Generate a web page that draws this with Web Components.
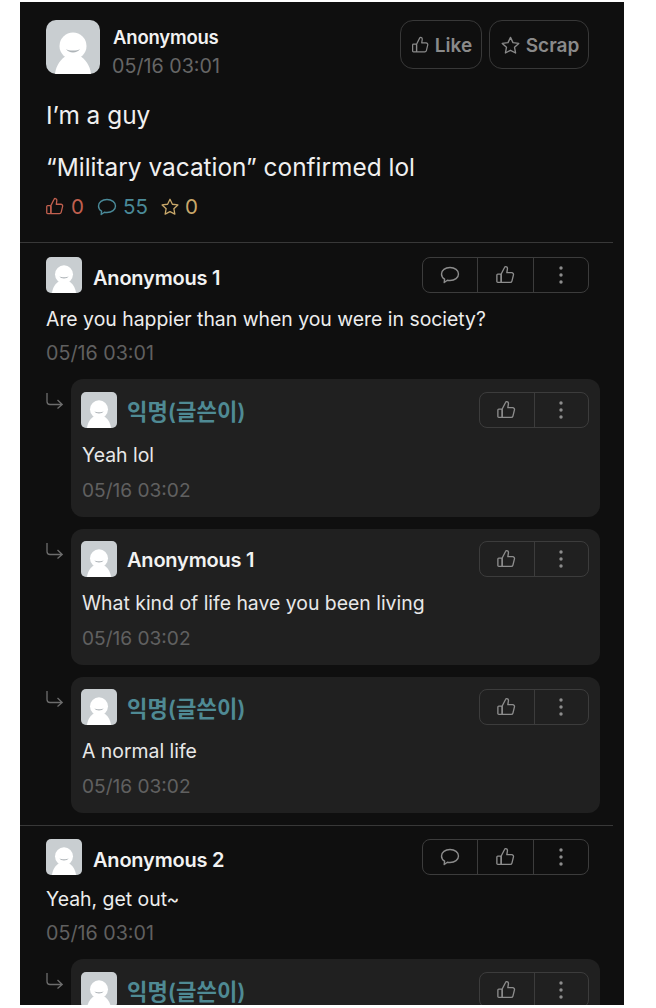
<!DOCTYPE html>
<html>
<head>
<meta charset="utf-8">
<style>
    html, body { margin: 0; padding: 0; background: #fff; }
    body { font-family: Inter, "Noto Sans CJK KR", sans-serif; height: 1008px; overflow: hidden; }
</style>
</head>
<body>
<app-panel>
    <main-post name="Anonymous" date="05/16 03:01" likes="0" comments="55" scraps="0">
        <p>I’m a guy</p>
        <p>“Military vacation” confirmed lol</p>
    </main-post>
    <post-comment name="Anonymous 1" date="05/16 03:01" text="Are you happier than when you were in society?">
        <post-reply author name="익명(글쓴이)" date="05/16 03:02" text="Yeah lol"></post-reply>
        <post-reply name="Anonymous 1" date="05/16 03:02" text="What kind of life have you been living"></post-reply>
        <post-reply author name="익명(글쓴이)" date="05/16 03:02" text="A normal life"></post-reply>
    </post-comment>
    <post-comment name="Anonymous 2" date="05/16 03:01" text="Yeah, get out~">
        <post-reply author name="익명(글쓴이)"></post-reply>
    </post-comment>
</app-panel>

<script>
const ICONS = {
    thumb: `<path d="M7.5 10.5 11 3.6c.3-.7 1-1 1.6-.8 1 .3 1.6 1.2 1.4 2.3L13.4 9h5c1.3 0 2.2 1.2 1.9 2.4l-1.6 6.4c-.2.8-1 1.4-1.8 1.4H7.5z"/><rect x="3" y="10.5" width="4.5" height="8.7" rx="1"/>`,
    bubble: `<path d="M12 4.5c4.8 0 8.5 2.8 8.5 6.5s-3.7 6.5-8.5 6.5c-.9 0-1.8-.1-2.6-.3L6.2 19.5l.4-3.3C4.6 15 3.5 13.1 3.5 11c0-3.7 3.7-6.5 8.5-6.5z"/>`,
    star: `<path d="m12 3.5 2.6 5.5 6 .8-4.4 4.1 1.1 5.9L12 17l-5.3 2.8 1.1-5.9-4.4-4.1 6-.8z"/>`
};

class UiIcon extends HTMLElement {
    connectedCallback() {
        const size = this.getAttribute("size") || 20;
        this.attachShadow({mode: "open"}).innerHTML = `
            <style>
                :host { display: inline-flex; color: inherit; }
                svg { fill: none; stroke: currentColor; stroke-width: 1.4; stroke-linejoin: round; stroke-linecap: round; }
            </style>
            <svg width="${size}" height="${size}" viewBox="0 0 24 24">${ICONS[this.getAttribute("name")]}</svg>
        `;
    }
}

class UserAvatar extends HTMLElement {
    connectedCallback() {
        const size = this.getAttribute("size") || 36;
        const radius = size > 40 ? 10 : 5;
        this.attachShadow({mode: "open"}).innerHTML = `
            <style>
                :host { display: block; flex: none; width: ${size}px; height: ${size}px; border-radius: ${radius}px; overflow: hidden; background: #c9ced1; }
                svg { display: block; width: 100%; height: 100%; }
            </style>
            <svg viewBox="0 0 54 54">
                <path d="M9 54c1-9 6-15 11-18h14c5 3 10 9 11 18z" fill="#fff"/>
                <circle cx="27" cy="26" r="13.5" fill="#fff"/>
                <path d="M20 29c2.5 4.5 11.5 4.5 14 0-2.5 2-11.5 2-14 0z" fill="#aeb4b8"/>
            </svg>
        `;
    }
}

class BtnGroup extends HTMLElement {
    connectedCallback() {
        const withReply = this.hasAttribute("reply");
        const dots = `<svg width="4" height="18" viewBox="0 0 4 18"><circle cx="2" cy="2" r="1.7"/><circle cx="2" cy="9" r="1.7"/><circle cx="2" cy="16" r="1.7"/></svg>`;
        this.attachShadow({mode: "open"}).innerHTML = `
            <style>
                :host { display: flex; flex: none; width: ${withReply ? 167 : 110}px; height: 36px; box-sizing: border-box; border: 1px solid #3c3c3c; border-radius: 8px; color: #8d8d8d; }
                div { flex: 1; display: flex; align-items: center; justify-content: center; }
                div + div { border-left: 1px solid #3c3c3c; }
                svg { fill: #8d8d8d; }
            </style>
            ${withReply ? `<div><ui-icon name="bubble" size="24"></ui-icon></div>` : ""}
            <div><ui-icon name="thumb" size="23"></ui-icon></div>
            <div>${dots}</div>
        `;
    }
}

class MainPost extends HTMLElement {
    connectedCallback() {
        const a = n => this.getAttribute(n);
        this.attachShadow({mode: "open"}).innerHTML = `
            <style>
                :host { display: block; padding: 18px 35px 22px 26px; }
                .head { display: flex; align-items: flex-start; }
                .who { flex: 1; margin-left: 13px; }
                .name { font-size: 18.5px; font-weight: 600; color: #f2f2f2; line-height: 24px; margin-top: 5px; letter-spacing: -0.2px; }
                .date { font-size: 19.7px; color: #666; line-height: 24px; margin: 5px 0 0 -1px; }
                .btns { display: flex; gap: 7px; }
                .btn { display: flex; align-items: center; justify-content: center; gap: 4px; height: 49px; box-sizing: border-box; padding-top: 2px; border: 1px solid #383838; border-radius: 13px; color: #8a8a8a; font-size: 19px; font-weight: 600; }
                .body { margin-top: 20px; font-size: 24.4px; line-height: 34px; color: #f0f0f0; }
                ::slotted(p) { margin: 0 0 18px; }
                .stats { display: flex; align-items: center; margin-top: -8px; font-size: 20.5px; line-height: 26px; }
                .stat { display: flex; align-items: center; gap: 4px; margin-right: 11px; }
                .stat:first-child { margin-left: -2px; gap: 5px; }
            </style>
            <div class="head">
                <user-avatar size="54"></user-avatar>
                <div class="who">
                    <div class="name">${a("name")}</div>
                    <div class="date">${a("date")}</div>
                </div>
                <div class="btns">
                    <div class="btn" style="width:82px"><ui-icon name="thumb" size="21"></ui-icon>Like</div>
                    <div class="btn" style="width:100px"><ui-icon name="star" size="23"></ui-icon>Scrap</div>
                </div>
            </div>
            <div class="body"><slot></slot></div>
            <div class="stats">
                <span class="stat" style="color:#c2604f"><ui-icon name="thumb" size="22"></ui-icon>${a("likes")}</span>
                <span class="stat" style="color:#4a8a99"><ui-icon name="bubble" size="24"></ui-icon>${a("comments")}</span>
                <span class="stat" style="color:#c9a86a"><ui-icon name="star" size="22"></ui-icon>${a("scraps")}</span>
            </div>
        `;
    }
}

class PostComment extends HTMLElement {
    connectedCallback() {
        const a = n => this.getAttribute(n);
        this.attachShadow({mode: "open"}).innerHTML = `
            <style>
                :host { display: block; border-top: 1px solid #383838; margin-right: 11px; padding: 14px 0 12px; }
                :host(:last-child) { padding-top: 13px; }
                .wrap { padding: 0 24px 0 26px; }
                .head { display: flex; align-items: center; }
                .name { flex: 1; margin: 6px 0 0 11px; font-size: 20px; font-weight: 600; color: #f2f2f2; letter-spacing: -0.2px; }
                .text { margin-top: 13px; font-size: 19.4px; line-height: 26px; color: #ededed; }
                :host(:last-child) .text { margin-top: 11px; }
                .date { margin-top: 8px; font-size: 19.7px; line-height: 26px; color: #606060; }
                .replies { display: flex; flex-direction: column; gap: 12px; margin-top: 13px; padding-left: 26px; margin-right: 13px; }
            </style>
            <div class="wrap">
                <div class="head">
                    <user-avatar size="36"></user-avatar>
                    <div class="name">${a("name")}</div>
                    <btn-group reply></btn-group>
                </div>
                <div class="text">${a("text")}</div>
                <div class="date">${a("date")}</div>
            </div>
            <div class="replies"><slot></slot></div>
        `;
    }
}

class PostReply extends HTMLElement {
    connectedCallback() {
        const a = n => this.getAttribute(n);
        const isAuthor = this.hasAttribute("author");
        const nameStyle = isAuthor ? "color:#4f8a94;font-size:22.2px" : "color:#f2f2f2;font-size:20px;letter-spacing:-0.2px;margin-top:2px";
        const body = this.hasAttribute("text") ? `
                <div class="text">${a("text")}</div>
                <div class="date">${a("date")}</div>` : "";
        this.attachShadow({mode: "open"}).innerHTML = `
            <style>
                :host { display: flex; }
                .arrow { flex: none; width: 25px; padding-top: 13px; color: #6d6d6d; }
                .arrow svg { display: block; fill: none; stroke: currentColor; stroke-width: 1.3; }
                .card { flex: 1; box-sizing: border-box; background: #202020; border-radius: 12px; padding: 12px 11px 14px 10px; }
                :host(:first-child) .card { padding-top: 13px; }
                .head { display: flex; align-items: center; }
                .name { flex: 1; margin-left: 10px; font-weight: 600; }
                .text { margin: 13px 0 0 1px; font-size: 19.4px; line-height: 26px; color: #e8e8e8; }
                :host(:first-child) .text { margin-top: 14px; }
                .date { margin: 9px 0 0 1px; font-size: 19.1px; line-height: 26px; color: #606060; }
            </style>
            <div class="arrow">
                <svg width="18" height="17" viewBox="0 0 18 17"><path d="M1 1v8.5q0 3 3 3h12M11.5 8l4.7 4.5-4.7 4"/></svg>
            </div>
            <div class="card">
                <div class="head">
                    <user-avatar size="36"></user-avatar>
                    <div class="name" style="${nameStyle}">${a("name")}</div>
                    <btn-group></btn-group>
                </div>${body}
            </div>
        `;
    }
}

class AppPanel extends HTMLElement {
    constructor() {
        super();
        this.attachShadow({mode: "open"}).innerHTML = `
            <style>
                :host { display: block; box-sizing: border-box; width: 604px; height: 1003px; margin: 2px 0 0 20px; background: #0f0f0f; overflow: hidden; }
            </style>
            <slot></slot>
        `;
    }
}

customElements.define("ui-icon", UiIcon);
customElements.define("user-avatar", UserAvatar);
customElements.define("btn-group", BtnGroup);
customElements.define("main-post", MainPost);
customElements.define("post-reply", PostReply);
customElements.define("post-comment", PostComment);
customElements.define("app-panel", AppPanel);
</script>
</body>
</html>
